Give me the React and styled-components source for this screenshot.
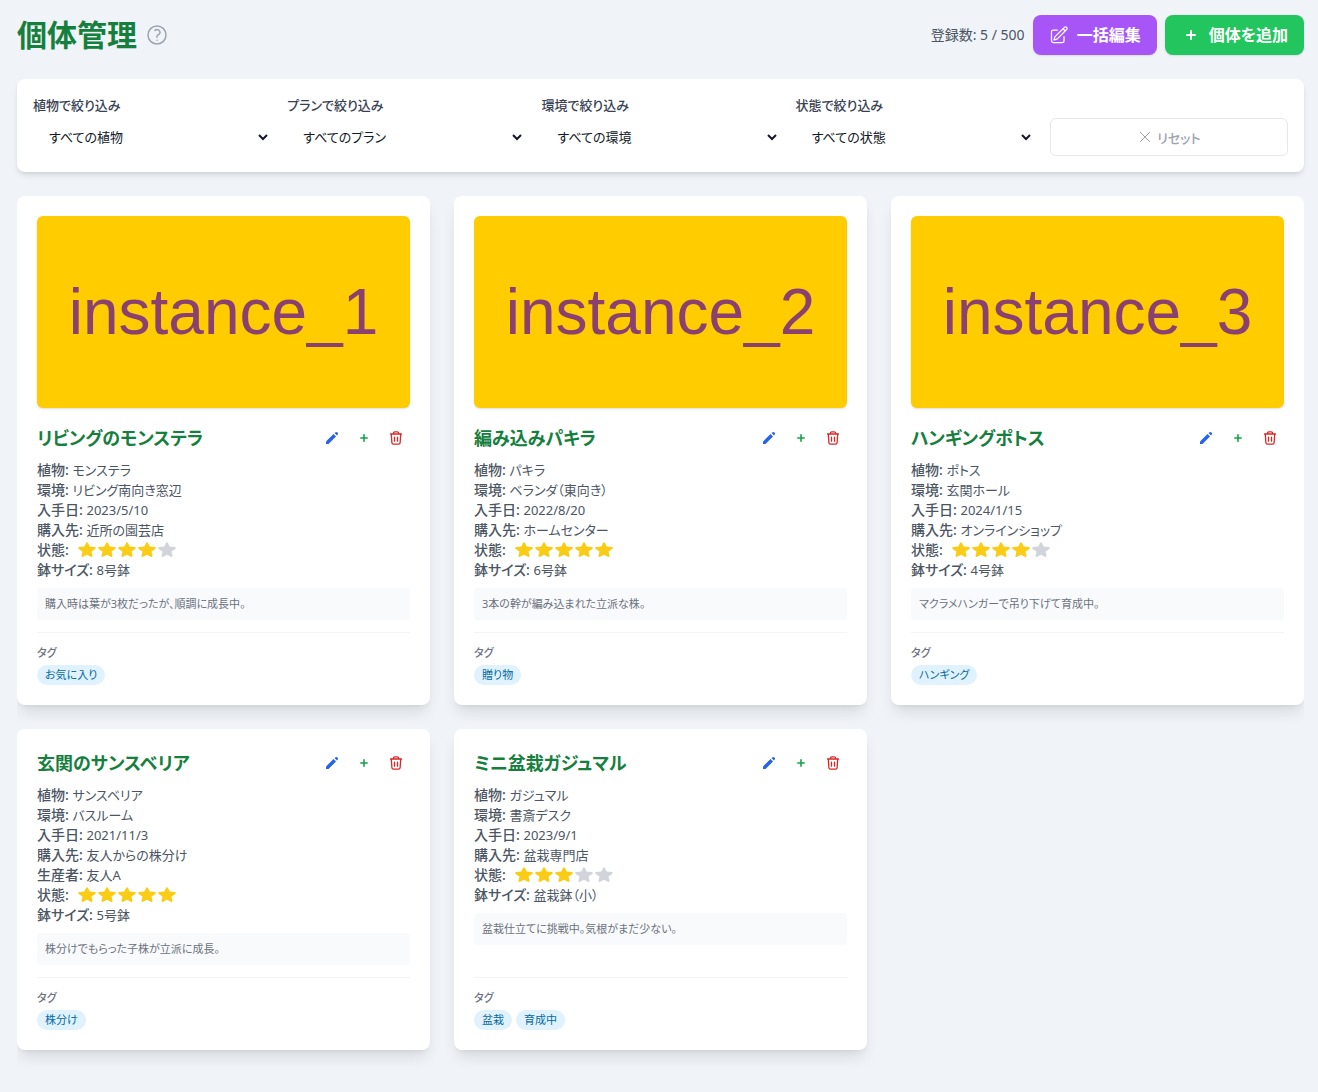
import React from "react"
import styled, { createGlobalStyle } from "styled-components"

const individuals = [
  {
    id: 1,
    name: "リビングのモンステラ",
    image: "instance_1",
    before: [["植物", "モンステラ"], ["環境", "リビング南向き窓辺"], ["入手日", "2023/5/10"], ["購入先", "近所の園芸店"]],
    rating: 4,
    pot: "8号鉢",
    note: "購入時は葉が3枚だったが、順調に成長中。",
    tags: ["お気に入り"],
  },
  {
    id: 2,
    name: "編み込みパキラ",
    image: "instance_2",
    before: [["植物", "パキラ"], ["環境", "ベランダ（東向き）"], ["入手日", "2022/8/20"], ["購入先", "ホームセンター"]],
    rating: 5,
    pot: "6号鉢",
    note: "3本の幹が編み込まれた立派な株。",
    tags: ["贈り物"],
  },
  {
    id: 3,
    name: "ハンギングポトス",
    image: "instance_3",
    before: [["植物", "ポトス"], ["環境", "玄関ホール"], ["入手日", "2024/1/15"], ["購入先", "オンラインショップ"]],
    rating: 4,
    pot: "4号鉢",
    note: "マクラメハンガーで吊り下げて育成中。",
    tags: ["ハンギング"],
  },
  {
    id: 4,
    name: "玄関のサンスベリア",
    before: [["植物", "サンスベリア"], ["環境", "バスルーム"], ["入手日", "2021/11/3"], ["購入先", "友人からの株分け"], ["生産者", "友人A"]],
    rating: 5,
    pot: "5号鉢",
    note: "株分けでもらった子株が立派に成長。",
    tags: ["株分け"],
  },
  {
    id: 5,
    name: "ミニ盆栽ガジュマル",
    before: [["植物", "ガジュマル"], ["環境", "書斎デスク"], ["入手日", "2023/9/1"], ["購入先", "盆栽専門店"]],
    rating: 3,
    pot: "盆栽鉢（小）",
    note: "盆栽仕立てに挑戦中。気根がまだ少ない。",
    tags: ["盆栽", "育成中"],
  },
]

const filters = [
  { name: "plant", label: "植物で絞り込み", all: "すべての植物" },
  { name: "plan", label: "プランで絞り込み", all: "すべてのプラン" },
  { name: "environment", label: "環境で絞り込み", all: "すべての環境" },
  { name: "status", label: "状態で絞り込み", all: "すべての状態" },
]

function HelpIcon() {
  return (
    <svg width="24" height="24" viewBox="0 0 24 24" fill="none" stroke="currentColor" strokeWidth="1.5" strokeLinecap="round" strokeLinejoin="round">
      <path d="M9.879 7.519c1.171-1.025 3.071-1.025 4.242 0 1.172 1.025 1.172 2.687 0 3.712-.203.179-.43.326-.67.442-.745.361-1.45.999-1.45 1.827v.75M21 12a9 9 0 1 1-18 0 9 9 0 0 1 18 0Zm-9 5.25h.008v.008H12v-.008Z" />
    </svg>
  )
}

function PencilSquareIcon() {
  return (
    <svg width="20" height="20" viewBox="0 0 24 24" fill="none" stroke="currentColor" strokeWidth="1.5" strokeLinecap="round" strokeLinejoin="round">
      <path d="m16.862 4.487 1.687-1.688a1.875 1.875 0 1 1 2.652 2.652L10.582 16.07a4.5 4.5 0 0 1-1.897 1.13L6 18l.8-2.685a4.5 4.5 0 0 1 1.13-1.897l8.932-8.931Zm0 0L19.5 7.125M18 14v4.75A2.25 2.25 0 0 1 15.75 21H5.25A2.25 2.25 0 0 1 3 18.75V8.25A2.25 2.25 0 0 1 5.25 6H10" />
    </svg>
  )
}

function PlusIcon({ size }) {
  return (
    <svg width={size} height={size} viewBox="0 0 20 20" fill="currentColor">
      <path fillRule="evenodd" clipRule="evenodd" d="M10 5a1 1 0 0 1 1 1v3h3a1 1 0 1 1 0 2h-3v3a1 1 0 1 1-2 0v-3H6a1 1 0 1 1 0-2h3V6a1 1 0 0 1 1-1Z" />
    </svg>
  )
}

function PencilIcon() {
  return (
    <svg width="16" height="16" viewBox="0 0 16 16" fill="currentColor">
      <path d="M2 14v-2.5l7.5-7.5L12 6.500 4.500 14H2Z" />
      <path d="m10.500 3 .7-.6a1.700 1.700 0 0 1 2.400 2.400l-.6.7L10.500 3Z" />
    </svg>
  )
}

function TrashIcon() {
  return (
    <svg width="16" height="16" viewBox="0 0 16 16" fill="none" stroke="currentColor" strokeWidth="1.3" strokeLinecap="round" strokeLinejoin="round">
      <path d="M2.500 4h11M5.500 3.800V3a1.200 1.200 0 0 1 1.200-1.200h2.600A1.200 1.200 0 0 1 10.500 3v.8M3.300 4.200l.6 8.600a1.500 1.500 0 0 0 1.500 1.400h5.200a1.500 1.500 0 0 0 1.500-1.400l.6-8.600M6.500 7.200v4M9.500 7.200v4" />
    </svg>
  )
}

function CloseIcon() {
  return (
    <svg width="16" height="16" viewBox="0 0 24 24" fill="none" stroke="currentColor" strokeWidth="1.5" strokeLinecap="round">
      <path d="M5 19 19 5M5 5l14 14" />
    </svg>
  )
}

function StarIcon() {
  return (
    <svg width="20" height="20" viewBox="0 0 20 20" fill="currentColor">
      <path d="M9 3c.4-.9 1.600-.9 2 0l1.700 3.600 5 .5c1.200.1 1.500 1.100.6 1.800l-3.800 2.700 1 3.900c.3 1.100-.7 1.700-1.600 1.200L10 14.700l-3.900 2c-.9.5-1.900-.1-1.600-1.200l1-3.900-3.800-2.700c-.9-.7-.6-1.700.6-1.800l5-.5L9 3Z" />
    </svg>
  )
}

function IndividualCard({ item }) {
  return (
    <Card>
      {item.image && <Photo role="img" aria-label={item.image}>{item.image}</Photo>}
      <CardHeader>
        <CardTitle>{item.name}</CardTitle>
        <Actions>
          <IconButton type="button" $color="#2563eb" aria-label="編集"><PencilIcon /></IconButton>
          <IconButton type="button" $color="#16a34a" aria-label="追加"><PlusIcon size={16} /></IconButton>
          <IconButton type="button" $color="#dc2626" aria-label="削除"><TrashIcon /></IconButton>
        </Actions>
      </CardHeader>
      <Details>
        {item.before.map(([label, value]) => (
          <p key={label}><strong>{label}: </strong>{value}</p>
        ))}
        <StatusRow>
          <strong>状態:</strong>
          <Stars role="img" aria-label={`${item.rating} / 5`}>
            {[1, 2, 3, 4, 5].map((n) => (
              <Star key={n} $on={n <= item.rating}><StarIcon /></Star>
            ))}
          </Stars>
        </StatusRow>
        <p><strong>鉢サイズ: </strong>{item.pot}</p>
      </Details>
      <Note>{item.note}</Note>
      <TagSection>
        <TagLabel>タグ</TagLabel>
        <TagList>
          {item.tags.map((tag) => <Tag key={tag}>{tag}</Tag>)}
        </TagList>
      </TagSection>
    </Card>
  )
}

export default function App() {
  const [selected, setSelected] = React.useState({ plant: "", plan: "", environment: "", status: "" })

  function changeFilter(event) {
    setSelected({ ...selected, [event.target.name]: event.target.value })
  }

  return (
    <>
      <GlobalStyle />
      <Page>
        <Header>
          <TitleGroup>
            <h1>個体管理</h1>
            <HelpButton type="button" aria-label="ヘルプ"><HelpIcon /></HelpButton>
          </TitleGroup>
          <HeaderActions>
            <Count>登録数: 5 / 500</Count>
            <MainButton type="button" $color="#a855f7"><PencilSquareIcon />一括編集</MainButton>
            <MainButton type="button" $color="#22c55e"><PlusIcon size={20} />個体を追加</MainButton>
          </HeaderActions>
        </Header>
        <FilterPanel>
          {filters.map((filter) => (
            <Field key={filter.name}>
              <label htmlFor={filter.name}>{filter.label}</label>
              <select id={filter.name} name={filter.name} value={selected[filter.name]} onChange={changeFilter}>
                <option value="">{filter.all}</option>
              </select>
            </Field>
          ))}
          <ResetButton type="button" disabled><CloseIcon />リセット</ResetButton>
        </FilterPanel>
        <CardGrid>
          {individuals.map((item) => <IndividualCard key={item.id} item={item} />)}
        </CardGrid>
      </Page>
    </>
  )
}

const GlobalStyle = createGlobalStyle`
  * {
    box-sizing: border-box;
  }
  body {
    margin: 0;
    background: #f0f4f8;
    color: #1f2937;
    font-family: "Noto Sans", "Noto Sans CJK JP", sans-serif;
    font-size: 13px;
    line-height: 20px;
    font-feature-settings: "palt";
  }
  h1, h2, p {
    margin: 0;
  }
  button, select {
    font-family: inherit;
    font-feature-settings: inherit;
  }
  svg {
    display: block;
    flex-shrink: 0;
  }
`

const Page = styled.main`
  padding: 15px 14px 16px 17px;
`

const Header = styled.header`
  display: flex;
  justify-content: space-between;
  align-items: center;
  margin-bottom: 24px;
`

const TitleGroup = styled.div`
  display: flex;
  align-items: center;
  gap: 8px;
  h1 {
    color: #15803d;
    font-size: 30px;
    line-height: 36px;
    font-weight: 700;
  }
`

const HelpButton = styled.button`
  padding: 0;
  border: none;
  background: none;
  color: #9ca3af;
`

const HeaderActions = styled.div`
  display: flex;
  align-items: center;
  gap: 8px;
`

const Count = styled.span`
  color: #4b5563;
  font-size: 14px;
`

const MainButton = styled.button`
  display: flex;
  align-items: center;
  gap: 8px;
  height: 40px;
  padding: 0 16px;
  border: none;
  border-radius: 8px;
  background: ${(props) => props.$color};
  color: white;
  font-size: 16px;
  line-height: 24px;
  font-weight: 700;
  box-shadow: 0 1px 2px rgba(0, 0, 0, 0.1);
`

const FilterPanel = styled.section`
  display: grid;
  grid-template-columns: repeat(5, minmax(0, 1fr));
  align-items: end;
  gap: 16px;
  margin-bottom: 24px;
  padding: 16px;
  border-radius: 8px;
  background: white;
  box-shadow: 0 4px 6px -1px rgba(0, 0, 0, 0.1), 0 2px 4px -2px rgba(0, 0, 0, 0.1);
`

const Field = styled.div`
  label {
    display: block;
    margin-bottom: 3px;
    color: #374151;
    font-weight: 500;
  }
  select {
    display: block;
    width: 100%;
    height: 38px;
    padding: 8px 12px;
    border: none;
    border-radius: 6px;
    background-color: white;
    color: #111827;
    font-size: 13px;
  }
`

const ResetButton = styled.button`
  display: flex;
  align-items: center;
  justify-content: center;
  gap: 4px;
  height: 38px;
  border: 1px solid #e5e7eb;
  border-radius: 6px;
  background: white;
  color: #9ca3af;
  font-size: 13px;
  font-weight: 500;
`

const CardGrid = styled.section`
  display: grid;
  grid-template-columns: repeat(3, minmax(0, 1fr));
  gap: 24px;
  padding-bottom: 24px;
  overflow: hidden;
`

const Card = styled.article`
  display: flex;
  flex-direction: column;
  padding: 20px;
  border-radius: 8px;
  background: white;
  box-shadow: 0 10px 15px -3px rgba(0, 0, 0, 0.1), 0 4px 6px -4px rgba(0, 0, 0, 0.1);
`

const Photo = styled.div`
  display: flex;
  align-items: center;
  justify-content: center;
  height: 192px;
  margin-bottom: 16px;
  border-radius: 6px;
  background: #ffcc00;
  color: #8a4070;
  font-family: "Liberation Sans", sans-serif;
  font-size: 64px;
  line-height: 72px;
  box-shadow: 0 1px 3px rgba(0, 0, 0, 0.1), 0 1px 2px -1px rgba(0, 0, 0, 0.1);
`

const CardHeader = styled.div`
  display: flex;
  align-items: center;
  justify-content: space-between;
  margin-bottom: 8px;
`

const CardTitle = styled.h2`
  color: #15803d;
  font-size: 18px;
  line-height: 28px;
  font-weight: 600;
`

const Actions = styled.div`
  display: flex;
  gap: 4px;
`

const IconButton = styled.button`
  padding: 6px;
  border: none;
  border-radius: 14px;
  background: none;
  color: ${(props) => props.$color};
`

const Details = styled.div`
  color: #4b5563;
  p {
    height: 20px;
  }
  strong {
    font-size: 14px;
    font-weight: 500;
  }
`

const StatusRow = styled.div`
  display: flex;
  align-items: center;
`

const Stars = styled.div`
  display: flex;
  margin-left: 8px;
`

const Star = styled.span`
  color: ${(props) => (props.$on ? "#facc15" : "#d1d5db")};
`

const Note = styled.p`
  margin: 8px 0 12px;
  padding: 8px;
  border-radius: 4px;
  background: #f9fafb;
  color: #6b7280;
  font-size: 11px;
  line-height: 16px;
`

const TagSection = styled.div`
  margin-top: auto;
  padding-top: 12px;
  border-top: 1px solid #f3f4f6;
`

const TagLabel = styled.p`
  margin-bottom: 4px;
  color: #6b7280;
  font-size: 11px;
  line-height: 16px;
  font-weight: 500;
`

const TagList = styled.div`
  display: flex;
  flex-wrap: wrap;
  gap: 4px;
`

const Tag = styled.span`
  padding: 2px 8px;
  border-radius: 10px;
  background: #e0f2fe;
  color: #0369a1;
  font-size: 11px;
  line-height: 16px;
`
